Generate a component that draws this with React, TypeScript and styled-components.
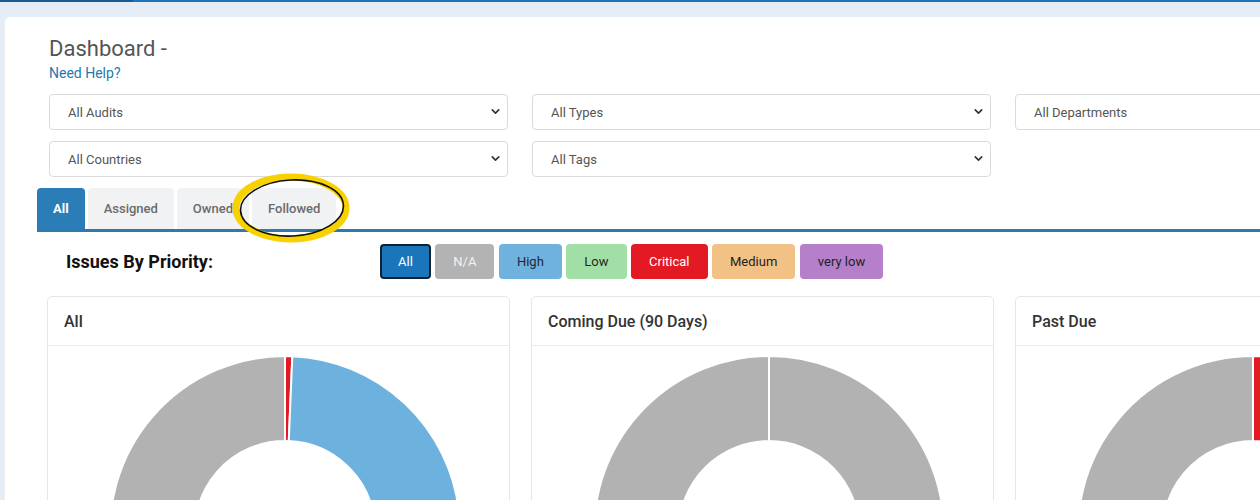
import React from 'react';
import styled, { createGlobalStyle } from 'styled-components';
import { ChevronDown } from 'lucide-react';

const GlobalStyle = createGlobalStyle`
  html, body {
    margin: 0;
    padding: 0;
    overflow: hidden;
    background: #e4ecf5;
    font-family: Roboto, "Liberation Sans", Arial, sans-serif;
  }
`;

const TopLine = styled.div`
  height: 2px;
  background: linear-gradient(to right, #1b5a8e 0, #1b5a8e 133px, #1f73b9 133px);
`;

const Page = styled.div`
  padding: 15px 0 0 4px;
`;

const Card = styled.div`
  background: #fff;
  border-radius: 6px 0 0 0;
  border-left: 1px solid #edf0f3;
  padding: 19px 0 0 44px;
  height: 480px;
  width: 1400px;
`;

const Title = styled.h1`
  margin: 0;
  font-size: 22px;
  line-height: 26px;
  font-weight: 400;
  color: #555;
`;

const HelpLink = styled.a`
  display: block;
  font-size: 14px;
  line-height: 20px;
  color: #2379b1;
  text-decoration: none;
  margin-top: 1px;
`;

const Filters = styled.div`
  display: grid;
  grid-template-columns: repeat(3, 459px);
  grid-auto-rows: 36px;
  column-gap: 24px;
  row-gap: 11px;
  margin-top: 11px;
`;

const SelectWrap = styled.div`
  position: relative;
`;

const Select = styled.select`
  appearance: none;
  width: 100%;
  height: 36px;
  border: 1px solid #dadada;
  border-radius: 4px;
  background: #fff;
  padding: 0 18px;
  font-family: Roboto, "Liberation Sans", Arial, sans-serif;
  font-size: 13px;
  color: #555;
`;

const Chevron = styled.span`
  position: absolute;
  right: 6px;
  top: 11px;
  display: flex;
  color: #333;
  pointer-events: none;
`;

const TabBar = styled.div`
  position: relative;
  display: flex;
  gap: 3px;
  margin: 11px 0 0 -12px;
  border-bottom: 3px solid #2f7aaa;
`;

const Tab = styled.button<{ $active?: boolean }>`
  height: 41px;
  padding: 0 16px;
  border: none;
  border-radius: 4px 4px 0 0;
  background: ${(p) => (p.$active ? '#2b7db7' : '#f1f2f4')};
  color: ${(p) => (p.$active ? '#fff' : '#6b6b6b')};
  font-family: Roboto, "Liberation Sans", Arial, sans-serif;
  font-size: 13px;
  font-weight: ${(p) => (p.$active ? 700 : 500)};
`;

const Marker = styled.svg`
  position: absolute;
  left: 193px;
  top: -16px;
  pointer-events: none;
`;

const PriorityRow = styled.div`
  display: flex;
  align-items: center;
  margin: 12px 0 0 17px;
`;

const PriorityTitle = styled.h2`
  margin: 0;
  width: 314px;
  font-size: 18px;
  font-weight: 700;
  color: #111;
`;

const Pills = styled.div`
  display: flex;
  gap: 4.5px;
`;

const Pill = styled.button<{ $bg: string; $fg: string; $active?: boolean }>`
  height: 35px;
  padding: 0 ${(p) => (p.$active ? 16 : 17)}px;
  border: ${(p) => (p.$active ? '2px solid #0d2233' : '1px solid transparent')};
  border-radius: 4px;
  background: ${(p) => p.$bg};
  color: ${(p) => p.$fg};
  font-family: Roboto, "Liberation Sans", Arial, sans-serif;
  font-size: 13px;
`;

const Charts = styled.div`
  display: grid;
  grid-template-columns: repeat(3, 463px);
  column-gap: 21px;
  margin: 17px 0 0 -2px;
`;

const ChartCard = styled.div`
  border: 1px solid #e6e6e6;
  border-radius: 5px;
  background: #fff;
`;

const ChartHeader = styled.div`
  height: 48px;
  display: flex;
  align-items: center;
  padding-left: 16px;
  border-bottom: 1px solid #ebebeb;
  font-size: 16px;
  font-weight: 500;
  color: #333;
`;

const ChartBody = styled.div`
  height: 360px;
`;

type Slice = { from: number; to: number; color: string };

const CX = 237;
const CY = 185;
const R = 175;
const IR = 90;

function pt(r: number, deg: number) {
  const a = (deg * Math.PI) / 180;
  return `${CX + r * Math.sin(a)} ${CY - r * Math.cos(a)}`;
}

function arc(s: Slice) {
  const large = s.to - s.from > 180 ? 1 : 0;
  return `M ${pt(R, s.from)} A ${R} ${R} 0 ${large} 1 ${pt(R, s.to)} L ${pt(IR, s.to)} A ${IR} ${IR} 0 ${large} 0 ${pt(IR, s.from)} Z`;
}

function Donut({ slices }: { slices: Slice[] }) {
  return (
    <svg width="461" height="360">
      {slices.map((s, i) => (
        <path key={i} d={arc(s)} fill={s.color} stroke="#fff" strokeWidth={2} />
      ))}
    </svg>
  );
}

const GRAY = '#b2b2b2';
const RED = '#e01b24';
const BLUE = '#6db1df';

const charts: { title: string; slices: Slice[] }[] = [
  {
    title: 'All',
    slices: [
      { from: 0, to: 2.4, color: RED },
      { from: 2.4, to: 165, color: BLUE },
      { from: 165, to: 360, color: GRAY },
    ],
  },
  {
    title: 'Coming Due (90 Days)',
    slices: [
      { from: 0, to: 180, color: GRAY },
      { from: 180, to: 360, color: GRAY },
    ],
  },
  {
    title: 'Past Due',
    slices: [
      { from: 0, to: 60, color: RED },
      { from: 60, to: 360, color: GRAY },
    ],
  },
];

const pills = [
  { label: 'All', bg: '#1b75bb', fg: '#fff', active: true },
  { label: 'N/A', bg: '#b3b3b3', fg: '#f2f2f2' },
  { label: 'High', bg: '#6fb2e0', fg: '#1c2a36' },
  { label: 'Low', bg: '#a2dfa6', fg: '#1c2a1c' },
  { label: 'Critical', bg: '#e31a24', fg: '#fff' },
  { label: 'Medium', bg: '#f2c185', fg: '#222' },
  { label: 'very low', bg: '#b57fc9', fg: '#222' },
];

function FilterSelect({ label }: { label: string }) {
  return (
    <SelectWrap>
      <Select defaultValue={label}>
        <option>{label}</option>
      </Select>
      <Chevron>
        <ChevronDown size={13} strokeWidth={3} />
      </Chevron>
    </SelectWrap>
  );
}

export default function App() {
  return (
    <>
      <GlobalStyle />
      <TopLine />
      <Page>
        <Card>
          <Title>Dashboard -</Title>
          <HelpLink href="#">Need Help?</HelpLink>
          <Filters>
            <FilterSelect label="All Audits" />
            <FilterSelect label="All Types" />
            <FilterSelect label="All Departments" />
            <FilterSelect label="All Countries" />
            <FilterSelect label="All Tags" />
          </Filters>
          <TabBar>
            <Tab $active>All</Tab>
            <Tab>Assigned</Tab>
            <Tab>Owned</Tab>
            <Tab>Followed</Tab>
            <Marker width="124" height="74" viewBox="0 0 124 74">
              <ellipse cx="61" cy="36" rx="55" ry="31" fill="none" stroke="#f7d200" strokeWidth="7" />
              <ellipse
                cx="62"
                cy="36"
                rx="51.5"
                ry="28"
                fill="none"
                stroke="#111"
                strokeWidth="1.6"
                transform="rotate(-3 62 36)"
              />
            </Marker>
          </TabBar>
          <PriorityRow>
            <PriorityTitle>Issues By Priority:</PriorityTitle>
            <Pills>
              {pills.map((p) => (
                <Pill key={p.label} $bg={p.bg} $fg={p.fg} $active={p.active}>
                  {p.label}
                </Pill>
              ))}
            </Pills>
          </PriorityRow>
          <Charts>
            {charts.map((c) => (
              <ChartCard key={c.title}>
                <ChartHeader>{c.title}</ChartHeader>
                <ChartBody>
                  <Donut slices={c.slices} />
                </ChartBody>
              </ChartCard>
            ))}
          </Charts>
        </Card>
      </Page>
    </>
  );
}
